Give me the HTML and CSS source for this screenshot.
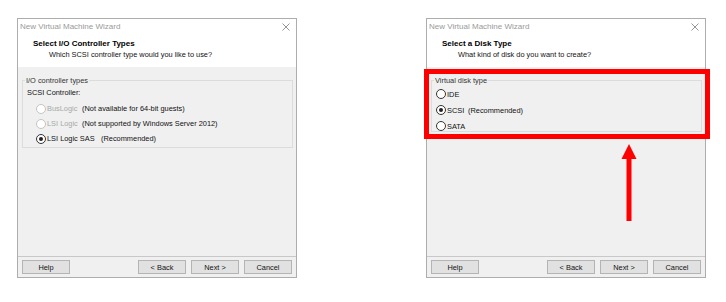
FILE: index.html
```html
<!DOCTYPE html>
<html lang="en">
<head>
    <meta charset="UTF-8">
    <title>New Virtual Machine Wizard</title>
    <link rel="stylesheet" href="styles.css">
</head>
<body>

    <div class="screens">

        <div class="dialog">
            <div class="titlebar">
                <span>New Virtual Machine Wizard</span>
                <svg class="close" width="8" height="8" viewBox="0 0 8 8"><path d="M0.5 0.5 L7.5 7.5 M7.5 0.5 L0.5 7.5" stroke="#8a8a8a" stroke-width="0.9"/></svg>
            </div>
            <div class="head">
                <h2>Select I/O Controller Types</h2>
                <p>Which SCSI controller type would you like to use?</p>
            </div>
            <div class="body">
                <fieldset class="group group-io">
                    <legend>I/O controller types</legend>
                    <div class="caption">SCSI Controller:</div>
                    <div class="option disabled">
                        <span class="radio"></span>
                        <span class="name name-short">BusLogic</span>
                        <span class="note">(Not available for 64-bit guests)</span>
                    </div>
                    <div class="option disabled">
                        <span class="radio"></span>
                        <span class="name name-short">LSI Logic</span>
                        <span class="note">(Not supported by Windows Server 2012)</span>
                    </div>
                    <div class="option">
                        <span class="radio checked"></span>
                        <span class="name name-long">LSI Logic SAS</span>
                        <span class="note">(Recommended)</span>
                    </div>
                </fieldset>
            </div>
            <div class="footer">
                <button>Help</button>
                <div class="spacer"></div>
                <button>&lt; Back</button>
                <button>Next &gt;</button>
                <button>Cancel</button>
            </div>
        </div>

        <div class="dialog dialog-disk">
            <div class="titlebar">
                <span>New Virtual Machine Wizard</span>
                <svg class="close" width="8" height="8" viewBox="0 0 8 8"><path d="M0.5 0.5 L7.5 7.5 M7.5 0.5 L0.5 7.5" stroke="#8a8a8a" stroke-width="0.9"/></svg>
            </div>
            <div class="head">
                <h2>Select a Disk Type</h2>
                <p>What kind of disk do you want to create?</p>
            </div>
            <div class="body">
                <fieldset class="group group-disk">
                    <legend>Virtual disk type</legend>
                    <div class="option">
                        <span class="radio"></span>
                        <span class="name">IDE</span>
                    </div>
                    <div class="option">
                        <span class="radio checked"></span>
                        <span class="name name-scsi">SCSI</span>
                        <span class="note">(Recommended)</span>
                    </div>
                    <div class="option">
                        <span class="radio"></span>
                        <span class="name">SATA</span>
                    </div>
                </fieldset>
            </div>
            <div class="footer">
                <button>Help</button>
                <div class="spacer"></div>
                <button>&lt; Back</button>
                <button>Next &gt;</button>
                <button>Cancel</button>
            </div>

            <div class="highlight"></div>
            <svg class="arrow" width="16" height="77" viewBox="0 0 16 77">
                <polygon points="8,0 15.5,15 0.5,15" fill="#f00"/>
                <rect x="5.5" y="14" width="5" height="63" fill="#f00"/>
            </svg>
        </div>

    </div>

</body>
</html>
```

FILE: styles.css
```css
body {
    margin: 0;
    background: #fff;
    font-family: "Liberation Sans", Arial, sans-serif;
    font-size: 7.4px;
    color: #111;
}

.screens {
    display: flex;
    gap: 129px;
    padding: 18px 0 0 17px;
}

.dialog {
    position: relative;
    width: 278px;
    height: 258px;
    border: 1px solid #adadad;
    background: #f0f0f0;
    display: flex;
    flex-direction: column;
}

.titlebar {
    height: 15px;
    background: #fff;
    display: flex;
    align-items: center;
    justify-content: space-between;
    padding: 0 6px 1px 2px;
    color: #9a9a9a;
    font-size: 8px;
}

.head {
    height: 32px;
    background: #fff;
    padding: 3px 0 0 15px;
    box-sizing: border-box;
}

.head h2 {
    margin: 0;
    font-size: 8px;
    font-weight: bold;
    color: #000;
    line-height: 11px;
}

.head p {
    margin: 0;
    padding-left: 16px;
    line-height: 11px;
}

.body {
    flex: 1;
    padding: 8px 3px 0 4px;
    border-bottom: 1px solid #c8c8c8;
}

.group {
    margin: 0;
    padding: 0;
    border: 1px solid #dcdcdc;
    min-width: 0;
}

.group legend {
    padding: 0 1px;
    margin-left: 2px;
    line-height: 11px;
    color: #333;
}

.group-io {
    height: 71px;
}

.group-io .caption {
    line-height: 14px;
    margin-left: 4px;
}

.group-io .option {
    padding-left: 13px;
}

.group-io .caption + .option {
    margin-top: 1px;
}

.group-disk {
    height: 55px;
}

.option {
    display: flex;
    align-items: center;
    height: 15px;
}

.group-disk .option {
    height: 16px;
    padding-left: 4px;
}

.group-disk .option:first-of-type {
    margin-top: 0;
}

.radio {
    width: 8px;
    height: 8px;
    border: 1px solid #333;
    border-radius: 50%;
    background: #fff;
    margin-right: 1px;
    position: relative;
}

.radio.checked::after {
    content: "";
    position: absolute;
    left: 2px;
    top: 2px;
    width: 4px;
    height: 4px;
    border-radius: 50%;
    background: #222;
}

.disabled .radio {
    border-color: #c4c4c4;
}

.disabled .name {
    color: #a8a8a8;
}

.name-short {
    width: 35px;
}

.name-long {
    width: 54px;
}

.name-scsi {
    width: 21px;
}

.footer {
    height: 20px;
    display: flex;
    align-items: center;
    gap: 5px;
    padding: 0 4px 0 4px;
}

.spacer {
    flex: 1;
}

button {
    width: 48px;
    height: 14px;
    padding: 0;
    border: 1px solid #b4b4b4;
    background: #e1e1e1;
    font-family: "Liberation Sans", Arial, sans-serif;
    font-size: 7.4px;
    color: #111;
}

.highlight {
    position: absolute;
    left: -3px;
    top: 50px;
    width: 276px;
    height: 60px;
    border: 5px solid #f00;
}

.arrow {
    position: absolute;
    left: 194px;
    top: 125px;
}
```
